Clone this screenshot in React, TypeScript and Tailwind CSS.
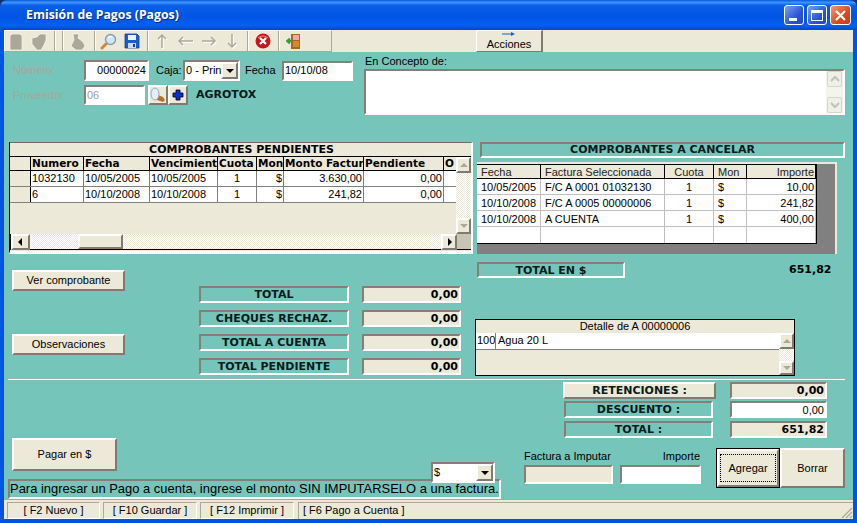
const sunken = "border-2 border-t-[#857f77] border-l-[#857f77] border-b-white border-r-white"
const raised = "border-2 border-t-white border-l-white border-b-[#7f7b71] border-r-[#7f7b71] bg-[#ece9d8]"
const dither = "bg-[repeating-conic-gradient(#ece9d8_0_25%,#ffffff_0_50%)] bg-[length:2px_2px]"
const boldFont = "font-['DejaVu_Sans'] font-bold text-[11px] text-[#0b1a1a]"

function BoxLabel({ text, className }: { text: string; className: string }) {
    return (
        <div className={`${sunken} ${boldFont} flex items-center justify-center whitespace-nowrap pt-[1px] ${className}`}>
            {text}
        </div>
    )
}

function ValueBox({ text, className, white }: { text: string; className: string; white?: boolean }) {
    return (
        <div className={`${sunken} ${white ? "bg-white font-normal text-[11px]" : "bg-[#ece9d8] font-['DejaVu_Sans'] font-bold text-[11px]"} flex items-center justify-end pr-[1px] pt-[1px] text-black ${className}`}>
            {text}
        </div>
    )
}

function Btn({ text, className }: { text: string; className: string }) {
    return <div className={`${raised} flex items-center justify-center ${className}`}>{text}</div>
}

function Arrow({ dir, size = 8, color = "#000" }: { dir: "up" | "down" | "left" | "right"; size?: number; color?: string }) {
    const pts = { up: "4,2 0,6 8,6", down: "0,2 8,2 4,6", left: "5,0 5,8 1,4", right: "3,0 3,8 7,4" }[dir]
    return (
        <svg width={size} height={size} viewBox="0 0 8 8">
            <polygon points={pts} fill={color} />
        </svg>
    )
}

function ScrollBtn({ dir, color, className }: { dir: "up" | "down" | "left" | "right"; color?: string; className: string }) {
    return (
        <div className={`${raised} flex items-center justify-center ${className}`}>
            <Arrow dir={dir} color={color} />
        </div>
    )
}

// botones deshabilitados del cuadro "En Concepto de"
function ChevronBtn({ d }: { d: string }) {
    return (
        <div className="flex h-[16px] w-[15px] items-center justify-center rounded-[2px] border border-[#d8d6c8] bg-[#f1f0e6]">
            <svg width="10" height="8" viewBox="0 0 10 8" fill="none">
                <path d={d} stroke="#c4c2b6" strokeWidth="2" />
            </svg>
        </div>
    )
}

function Sep() {
    return <div className="h-[20px] w-[2px] border-l border-l-[#aca899] border-r border-r-white" />
}

function GrayArrow({ d }: { d: string }) {
    return (
        <svg width="16" height="16" viewBox="0 0 16 16" fill="none">
            <path d={d} stroke="#fff" strokeWidth="1.5" transform="translate(1 1)" />
            <path d={d} stroke="#aca899" strokeWidth="1.5" />
        </svg>
    )
}

function Toolbar() {
    return (
        <div className="flex h-[22px] bg-[#ece9d8]">
            <div className="flex h-[22px] w-[328px] items-center border border-t-white border-l-white border-b-[#aca899] border-r-[#aca899]">
                <svg className="ml-[4px] mt-[1px]" width="14" height="18" viewBox="0 0 14 18">
                    <path d="M1 17V4q0-3 3-3h6q3 0 3 3v13z" fill="#aca899" stroke="#fff" strokeWidth="0.6" />
                </svg>
                <svg className="ml-[8px] mt-[1px]" width="16" height="18" viewBox="0 0 16 18">
                    <path d="M1 5l5-1 3-3 6 0 0 6-2 5-3 5-4 0-5-6z" fill="#aca899" stroke="#fff" strokeWidth="0.6" />
                </svg>
                <div className="ml-[7px]"><Sep /></div>
                <div className="ml-[6px]"><Sep /></div>
                <svg className="ml-[6px] mt-[1px]" width="16" height="18" viewBox="0 0 16 18">
                    <path d="M3 1h6l-1 4 5 4 2 4-3 4H6L1 13l3-6z" fill="#aca899" stroke="#fff" strokeWidth="0.6" />
                </svg>
                <div className="ml-[8px]"><Sep /></div>
                <svg className="ml-[4px]" width="17" height="17" viewBox="0 0 17 17">
                    <path d="M6 11l-4 4" stroke="#c98a3c" strokeWidth="3" strokeLinecap="round" />
                    <circle cx="10.5" cy="6.5" r="5" fill="#cfe6f8" stroke="#8a9bb0" strokeWidth="1.4" />
                    <path d="M8 5q2-2 4-1" stroke="#fff" strokeWidth="1.2" fill="none" />
                </svg>
                <svg className="ml-[7px]" width="16" height="16" viewBox="0 0 16 16">
                    <path d="M1 1h12l2 2v12H1z" fill="#1c5fc4" stroke="#123f8c" strokeWidth="0.8" />
                    <rect x="4" y="2" width="8" height="5" fill="#e8f0fa" />
                    <rect x="4" y="10" width="8" height="5" fill="#cfd8e6" />
                    <rect x="9" y="11" width="2" height="3" fill="#123f8c" />
                </svg>
                <div className="ml-[7px]"><Sep /></div>
                <div className="ml-[6px]"><GrayArrow d="M7 15V2M3 6l4-4 4 4" /></div>
                <div className="ml-[7px]"><GrayArrow d="M15 8H1M5 4L1 8l4 4" /></div>
                <div className="ml-[7px]"><GrayArrow d="M1 8h13M10 4l4 4-4 4" /></div>
                <div className="ml-[7px]"><GrayArrow d="M8 1v13M4 10l4 4 4-4" /></div>
                <div className="ml-[7px]"><Sep /></div>
                <svg className="ml-[6px]" width="16" height="16" viewBox="0 0 16 16">
                    <circle cx="8" cy="8" r="7.5" fill="#c8141c" />
                    <path d="M3 5q5-4 10 0" stroke="#ee7a7a" strokeWidth="1.2" fill="none" />
                    <path d="M5 5l6 6M11 5l-6 6" stroke="#fff" strokeWidth="2.2" />
                </svg>
                <div className="ml-[7px]"><Sep /></div>
                <svg className="ml-[6px]" width="16" height="16" viewBox="0 0 16 16">
                    <rect x="5" y="1" width="9" height="15" fill="#a9661c" />
                    <rect x="7" y="2" width="6" height="5" fill="#f0a8a0" />
                    <rect x="7" y="8" width="6" height="6" fill="#d08a30" />
                    <path d="M1 8h5M4 5.5L1 8l3 2.5" stroke="#3f9a3a" strokeWidth="2" fill="none" />
                </svg>
            </div>
            <div className={`ml-[144px] flex h-[22px] w-[67px] flex-col items-center border border-t-white border-l-white border-b-[#7f7b71] border-r-[#7f7b71] border-r-2`}>
                <svg className="mt-[1px]" width="14" height="5" viewBox="0 0 14 5">
                    <path d="M0 2h10" stroke="#1c5fc4" />
                    <path d="M9 0l4 2-4 2z" fill="#1c5fc4" />
                </svg>
                <span className="mt-[1px] leading-[13px]">Acciones</span>
            </div>
        </div>
    )
}

const leftCols = [21, 53, 66, 68, 39, 27, 80, 80, 13]
const leftHead = ["", "Numero", "Fecha", "Vencimiento", "Cuota", "Mon", "Monto Factura", "Pendiente", "O"]
const leftRows = [
    ["", "1032130", "10/05/2005", "10/05/2005", "1", "$", "3.630,00", "0,00", ""],
    ["", "6", "10/10/2008", "10/10/2008", "1", "$", "241,82", "0,00", ""],
]
const leftAlign = ["", "", "", "", "text-center", "text-right", "text-right", "text-right", ""]

function PendingGrid() {
    return (
        <div className="ml-[5px] flex h-[112px] w-[464px] flex-col border-t border-l border-t-[#6f6b62] border-l-black border-r-2 border-r-white border-b-[3px] border-b-white bg-[#ece9d8]">
            <div className={`${boldFont} flex h-[13px] items-center justify-center pl-[2px] pt-[2px] text-black`}>COMPROBANTES PENDIENTES</div>
            <div className="flex h-[78px] border-t border-t-black">
                <div className="w-[447px] overflow-hidden">
                    <div className="flex h-[14px] border-b border-b-black">
                        {leftHead.map((h, i) => (
                            <div
                                key={i}
                                style={{ width: leftCols[i] }}
                                className={`${i === 0 ? "" : "font-['DejaVu_Sans'] font-bold text-[10.5px]"} shrink-0 overflow-hidden whitespace-nowrap border-r border-r-black pl-[1px] leading-[13px] text-black`}
                            >
                                {h}
                            </div>
                        ))}
                    </div>
                    {leftRows.map((r, ri) => (
                        <div key={ri} className="flex h-[16px] border-b border-b-[#808080]">
                            {r.map((c, i) => (
                                <div
                                    key={i}
                                    style={{ width: leftCols[i] }}
                                    className={`${i === 0 ? "border-r-black bg-[#ece9d8]" : "border-r-[#808080] bg-white"} ${leftAlign[i]} shrink-0 overflow-hidden whitespace-nowrap border-r px-[1px] leading-[15px]`}
                                >
                                    {c}
                                </div>
                            ))}
                        </div>
                    ))}
                </div>
                <div className="flex w-[15px] flex-col">
                    <ScrollBtn dir="up" color="#aca899" className="h-[16px] w-[15px]" />
                    <div className={`flex-1 ${dither}`} />
                    <ScrollBtn dir="down" color="#aca899" className="h-[16px] w-[15px]" />
                </div>
            </div>
            <div className="flex h-[16px] border-l border-b border-l-black border-b-black">
                <ScrollBtn dir="left" className="h-[16px] w-[19px]" />
                <div className={`h-full w-[48px] ${dither}`} />
                <div className={`${raised} h-full w-[45px]`} />
                <div className={`h-full w-[318px] ${dither}`} />
                <ScrollBtn dir="right" className="h-[16px] w-[16px]" />
                <div className="h-full flex-1 bg-[#c9c5b5]" />
            </div>
        </div>
    )
}

const rightCols = [64, 124, 49, 33, 69]
const rightHead = ["Fecha", "Factura Seleccionada", "Cuota", "Mon", "Importe"]
const rightRows = [
    ["10/05/2005", "F/C A 0001 01032130", "1", "$", "10,00"],
    ["10/10/2008", "F/C A 0005 00000006", "1", "$", "241,82"],
    ["10/10/2008", "A CUENTA", "1", "$", "400,00"],
    ["", "", "", "", ""],
]
const rightAlign = ["pl-[4px]", "pl-[4px]", "text-center", "pl-[4px]", "pr-[1px] text-right"]

function CancelGrid() {
    return (
        <div className="ml-[1px] mt-[4px] h-[92px] w-[360px] border-t-2 border-t-[#ece9d8] border-r-2 border-r-[#ece9d8] bg-[#808080]">
            <div className="w-[340px] border-r border-b border-r-black border-b-black bg-white">
                <div className="flex h-[15px] border-t border-b border-t-black border-b-black bg-[#ece9d8]">
                    {rightHead.map((h, i) => (
                        <div key={i} style={{ width: rightCols[i] }} className={`${rightAlign[i]} shrink-0 border-r border-r-black leading-[14px] text-[#222]`}>
                            {h}
                        </div>
                    ))}
                </div>
                {rightRows.map((r, ri) => (
                    <div key={ri} className="flex h-[16px] border-b border-b-[#c0c0c0] last:border-b-0">
                        {r.map((c, i) => (
                            <div key={i} style={{ width: rightCols[i] }} className={`${rightAlign[i]} shrink-0 whitespace-nowrap border-r border-r-[#c0c0c0] leading-[16px]`}>
                                {c}
                            </div>
                        ))}
                    </div>
                ))}
            </div>
        </div>
    )
}

function Detalle() {
    return (
        <div className="mt-[40px] flex h-[57px] w-[320px] flex-col border border-black bg-[#ece9d8]">
            <div className="h-[13px] text-center leading-[12px]">Detalle de A 00000006</div>
            <div className="flex flex-1">
                <div className="flex-1">
                    <div className="flex h-[17px] border-b border-b-[#808080] bg-white leading-[15px]">
                        <div className="w-[20px] overflow-hidden border-r border-r-[#808080] pl-[1px]">100</div>
                        <div className="pl-[2px]">Agua 20 L</div>
                    </div>
                </div>
                <div className="flex w-[15px] flex-col">
                    <ScrollBtn dir="up" color="#aca899" className="h-[16px] w-[15px]" />
                    <div className={`flex-1 ${dither}`} />
                    <ScrollBtn dir="down" color="#aca899" className="h-[14px] w-[15px]" />
                </div>
            </div>
        </div>
    )
}

function SelectBox({ text, className }: { text: string; className: string }) {
    return (
        <div className={`${sunken} flex items-center bg-white ${className}`}>
            <span className="flex-1 whitespace-nowrap pl-[1px]">{text}</span>
            <div className={`${raised} flex h-full w-[17px] shrink-0 items-center justify-center`}>
                <Arrow dir="down" />
            </div>
        </div>
    )
}

function TopRow() {
    return (
        <div className="flex h-[90px]">
            <div className="w-[360px] pt-[8px]">
                <div className="flex h-[21px] items-center">
                    <span className="ml-[9px] w-[71px] text-[#a8a79a]">Número:</span>
                    <div className={`${sunken} flex h-[21px] w-[65px] items-center justify-end bg-white pr-[1px]`}>00000024</div>
                    <span className="ml-[7px] w-[27px]">Caja:</span>
                    <SelectBox text="0 - Prin" className="h-[21px] w-[57px]" />
                    <span className="ml-[5px] w-[37px]">Fecha</span>
                    <div className={`${sunken} flex h-[20px] w-[71px] items-center bg-white pl-[1px]`}>10/10/08</div>
                </div>
                <div className="mt-[4px] flex h-[20px] items-center">
                    <span className="ml-[9px] w-[71px] text-[#a8a79a]">Proveedor</span>
                    <div className={`${sunken} flex h-[20px] w-[61px] items-center bg-white pl-[1px] text-[#a0a0a0]`}>06</div>
                    <div className={`${raised} ml-[3px] flex h-[20px] w-[20px] items-center justify-center`}>
                        <svg width="16" height="16" viewBox="0 0 16 16">
                            <path d="M8 8l5 2 2 3-2 2-6-2z" fill="#b9702a" />
                            <ellipse cx="5" cy="7" rx="4" ry="6" fill="#e4eef8" stroke="#9aa8bc" />
                        </svg>
                    </div>
                    <div className={`${raised} flex h-[20px] w-[20px] items-center justify-center`}>
                        <svg width="12" height="12" viewBox="0 0 12 12">
                            <path d="M4 1h4v3h3v4H8v3H4V8H1V4h3z" fill="#0a2fd0" stroke="#000" strokeWidth="0.8" />
                        </svg>
                    </div>
                    <span className={`${boldFont} ml-[8px]`}>AGROTOX</span>
                </div>
            </div>
            <div className="pt-[1px]">
                <div className="ml-[1px] h-[16px] leading-[16px]">En Concepto de:</div>
                <div className={`${sunken} flex h-[46px] w-[481px] justify-end bg-white`}>
                    <div className="flex w-[17px] flex-col justify-between bg-[#f4f3ec] px-[1px]">
                        <ChevronBtn d="M1 6l4-4 4 4" />
                        <ChevronBtn d="M1 2l4 4 4-4" />
                    </div>
                </div>
            </div>
        </div>
    )
}

function MiddleRow() {
    const totals = ["TOTAL", "CHEQUES RECHAZ.", "TOTAL A CUENTA", "TOTAL PENDIENTE"]
    return (
        <div className="flex h-[124px]">
            <div className="ml-[8px] w-[113px] pt-[16px]">
                <Btn text="Ver comprobante" className="h-[21px] w-[113px]" />
                <Btn text="Observaciones" className="mt-[43px] h-[21px] w-[113px]" />
            </div>
            <div className="ml-[74px] flex flex-col gap-[7px] pt-[32px]">
                {totals.map((t) => (
                    <div key={t} className="flex">
                        <BoxLabel text={t} className="h-[17px] w-[150px]" />
                        <ValueBox text="0,00" className="ml-[13px] h-[17px] w-[99px]" />
                    </div>
                ))}
            </div>
            <div className="ml-[14px] pt-[8px]">
                <div className="flex items-center">
                    <BoxLabel text="TOTAL EN $" className="ml-[2px] h-[16px] w-[148px]" />
                    <span className="ml-[164px] font-['DejaVu_Sans'] text-[11px] font-bold">651,82</span>
                </div>
                <Detalle />
            </div>
        </div>
    )
}

function BottomRow() {
    return (
        <div className="flex h-[119px]">
            <div className="relative ml-[4px] w-[493px] pt-[58px]">
                <Btn text="Pagar en $" className="ml-[4px] h-[33px] w-[105px]" />
                <div className={`${sunken} mt-[8px] flex h-[20px] items-center whitespace-nowrap text-[12.95px]`}>
                    Para ingresar un Pago a cuenta, ingrese el monto SIN IMPUTARSELO a una factura.
                </div>
                <SelectBox text="$" className="absolute left-[423px] top-[82px] h-[21px] w-[64px]" />
            </div>
            <div className="pt-[2px]">
                <div className="ml-[62px] flex">
                    <div className={`${raised} ${boldFont} flex h-[17px] w-[153px] items-center justify-center pt-[1px]`}>RETENCIONES :</div>
                    <ValueBox text="0,00" className="ml-[14px] h-[17px] w-[97px]" />
                </div>
                <div className="ml-[63px] mt-[2px] flex">
                    <BoxLabel text="DESCUENTO :" className="h-[17px] w-[149px]" />
                    <ValueBox text="0,00" white className="ml-[17px] h-[17px] w-[97px]" />
                </div>
                <div className="ml-[63px] mt-[3px] flex">
                    <BoxLabel text="TOTAL :" className="h-[17px] w-[149px]" />
                    <ValueBox text="651,82" className="ml-[17px] h-[17px] w-[97px]" />
                </div>
                <div className="ml-[23px] mt-[10px] flex">
                    <div className="w-[177px] pt-[1px]">
                        <div className="flex h-[16px] justify-between pr-[1px] leading-[14px]">
                            <span>Factura a Imputar</span>
                            <span>Importe</span>
                        </div>
                        <div className="flex">
                            <div className={`${sunken} h-[19px] w-[89px] bg-[#ece9d8]`} />
                            <div className={`${sunken} ml-[7px] h-[19px] w-[81px] bg-white`} />
                        </div>
                    </div>
                    <div className="ml-[15px] flex h-[40px] w-[64px] border border-black">
                        <div className={`${raised} flex flex-1 items-center justify-center`}>
                            <div className="flex h-[28px] w-[56px] items-center justify-center border border-dotted border-black">Agregar</div>
                        </div>
                    </div>
                    <Btn text="Borrar" className="h-[40px] w-[65px]" />
                </div>
            </div>
        </div>
    )
}

function StatusBar() {
    const panels = [
        ["[ F2 Nuevo ]", "w-[93px]"],
        ["[ F10 Guardar ]", "w-[94px]"],
        ["[ F12 Imprimir ]", "w-[94px]"],
    ]
    return (
        <div className="flex h-[20px] items-center gap-[3px] border-t border-t-[#aca899] bg-[#ece9d8] pl-[3px] pt-[1px]">
            {panels.map(([t, w]) => (
                <div key={t} className={`${w} flex h-[17px] items-center justify-center border border-t-[#aca899] border-l-[#aca899] border-b-white border-r-white`}>
                    {t}
                </div>
            ))}
            <div className="relative ml-[1px] flex h-[17px] flex-1 items-center border-t border-l border-t-[#aca899] border-l-[#aca899] pl-[4px]">
                [ F6 Pago a Cuenta ]
                <svg className="absolute bottom-0 right-0" width="12" height="12" viewBox="0 0 12 12">
                    <path d="M11 1L1 11M11 5l-6 6M11 9l-2 2" stroke="#aca899" strokeWidth="1.2" />
                </svg>
            </div>
        </div>
    )
}

function TitleBar() {
    return (
        <div className="flex h-[30px] items-center rounded-t-[7px] bg-[linear-gradient(180deg,#0a58d8_0%,#3d95ff_8%,#0a5fe8_18%,#0054e3_55%,#0360f0_85%,#0348c8_100%)] pl-[26px] pr-[6px]">
            <span className="flex-1 font-['Open_Sans'] text-[12.3px] font-bold text-white [text-shadow:1px_1px_#0a2f8a]">
                Emisión de Pagos (Pagos)
            </span>
            <div className="flex h-[20px] w-[20px] items-end rounded-[3px] border border-white bg-[linear-gradient(135deg,#7fa2f0,#2a56d8_60%,#2048c8)] pb-[3px] pl-[4px]">
                <div className="h-[3px] w-[8px] bg-white" />
            </div>
            <div className="ml-[3px] flex h-[20px] w-[20px] items-center justify-center rounded-[3px] border border-white bg-[linear-gradient(135deg,#7fa2f0,#2a56d8_60%,#2048c8)]">
                <div className="h-[11px] w-[12px] border border-t-[3px] border-white" />
            </div>
            <div className="ml-[3px] flex h-[20px] w-[21px] items-center justify-center rounded-[3px] border border-white bg-[linear-gradient(135deg,#f09a78,#d84a20_60%,#c83c18)]">
                <svg width="13" height="13" viewBox="0 0 13 13">
                    <path d="M2 2l9 9M11 2l-9 9" stroke="#fff" strokeWidth="2.2" />
                </svg>
            </div>
        </div>
    )
}

export default function App() {
    return (
        <div className="h-[523px] w-[857px] overflow-hidden bg-[#12306e] font-['Liberation_Sans',sans-serif] text-[11px] text-black">
            <TitleBar />
            <div className="bg-[#0054e3] px-[4px] pb-[4px]">
                <Toolbar />
                <div className="h-[447px] bg-[#75c5bb]">
                    <TopRow />
                    <div className="flex h-[112px]">
                        <PendingGrid />
                        <div className="ml-[3px]">
                            <div className={`${sunken} ${boldFont} ml-[4px] flex h-[16px] w-[365px] items-center justify-center pt-[1px]`}>COMPROBANTES A CANCELAR</div>
                            <CancelGrid />
                        </div>
                    </div>
                    <MiddleRow />
                    <div className="ml-[4px] h-[2px] w-[837px] border-t border-b border-t-[#9fb5ac] border-b-white" />
                    <BottomRow />
                </div>
                <StatusBar />
            </div>
        </div>
    )
}
